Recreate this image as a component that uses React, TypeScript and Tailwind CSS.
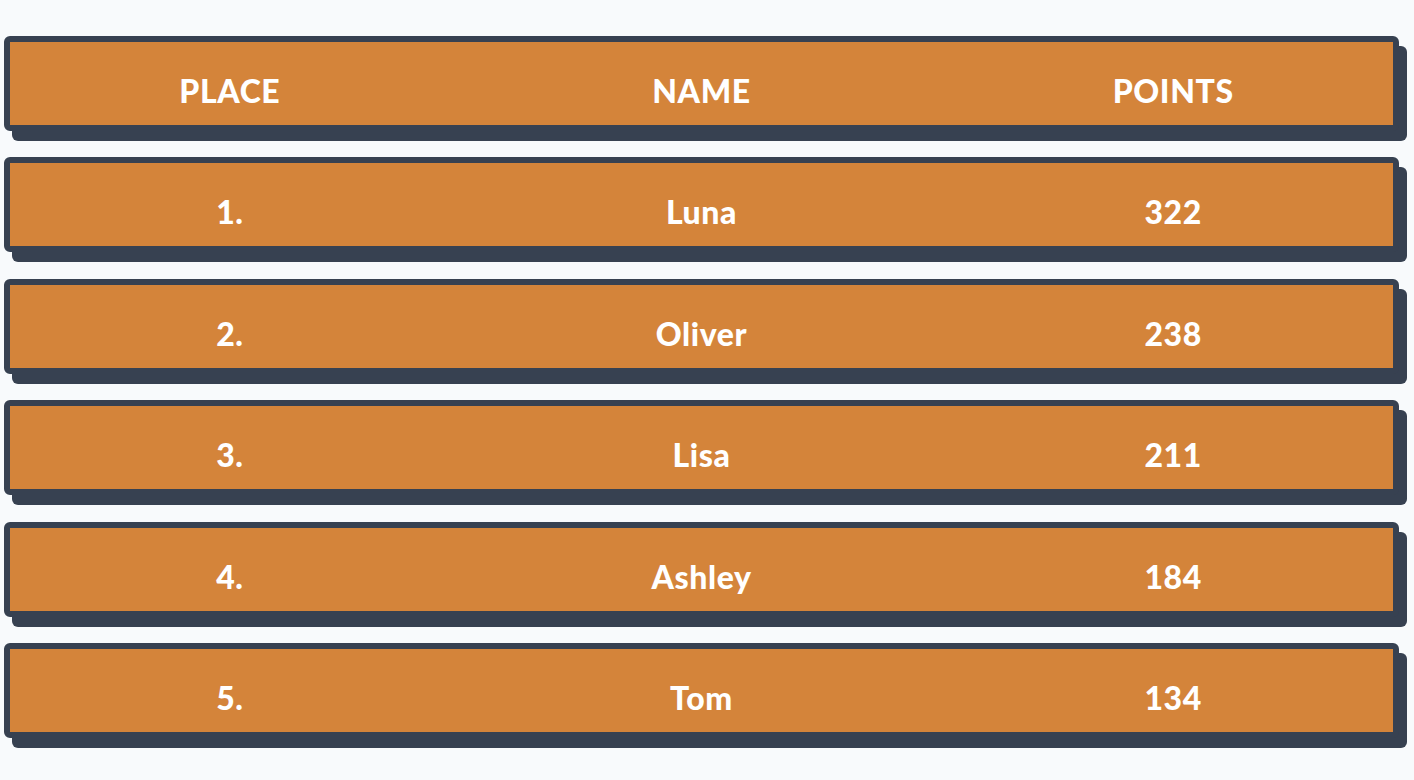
import React from 'react';

const rows = [
  { place: '1.', name: 'Luna', points: 322 },
  { place: '2.', name: 'Oliver', points: 238 },
  { place: '3.', name: 'Lisa', points: 211 },
  { place: '4.', name: 'Ashley', points: 184 },
  { place: '5.', name: 'Tom', points: 134 },
];

const Row: React.FC<{ cells: (string | number)[] }> = ({ cells }) => (
  <div className="h-[95px] rounded-md border-[6px] border-[#374151] bg-[#d4843a] shadow-[8px_10px_0_0_#374151] overflow-hidden">
    <div className="-mx-[16px] grid grid-cols-3 pt-[26px]">
      {cells.map((c, i) => (
        <div key={i} className="text-center text-[32px] leading-[45px] font-black tracking-[0.6px] text-white">
          {c}
        </div>
      ))}
    </div>
  </div>
);

export default function App() {
  return (
    <div
      className="min-h-screen bg-[#f8fafc] pt-[36px] pl-[4px] pr-[15px]"
      style={{ fontFamily: 'Lato, "Noto Sans", sans-serif' }}
    >
      <div className="flex flex-col gap-[26.4px]">
        <Row cells={['PLACE', 'NAME', 'POINTS']} />
        {rows.map((r) => (
          <Row key={r.place} cells={[r.place, r.name, r.points]} />
        ))}
      </div>
    </div>
  );
}
